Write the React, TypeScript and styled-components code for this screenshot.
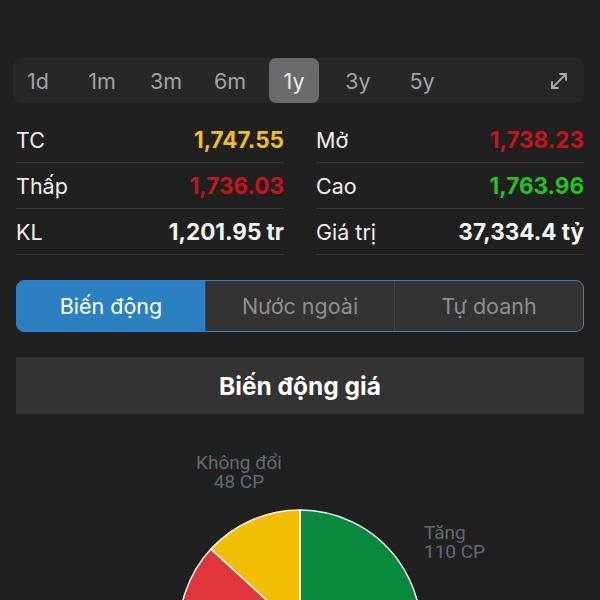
import * as React from "react"
import styled, { createGlobalStyle } from "styled-components"
import { MoveDiagonal } from "lucide-react"

const GlobalStyle = createGlobalStyle`
    html, body {
        margin: 0;
        padding: 0;
        background: #202020;
        height: 600px;
        overflow: hidden;
    }
    body {
        font-family: Inter, "Noto Sans", sans-serif;
        color: #f2f2f2;
    }
`

const Page = styled.div`
    padding: 58px 16px 0;
`

const PeriodBar = styled.div`
    height: 45px;
    margin-left: -3px;
    display: flex;
    align-items: stretch;
    gap: 14px;
    background: #272727;
    border-radius: 8px;
`

const PeriodButton = styled.div<{ $active?: boolean }>`
    width: 50px;
    display: flex;
    align-items: center;
    justify-content: center;
    border-radius: 7px;
    font-size: 21.5px;
    color: ${({ $active }) => ($active ? "#ececec" : "#a3a3a3")};
    background: ${({ $active }) => ($active ? "#6a6a6a" : "transparent")};
`

const ExpandButton = styled.div`
    margin-left: auto;
    width: 50px;
    display: flex;
    align-items: center;
    justify-content: center;
    color: #a8a8a8;
`

const StatsGrid = styled.div`
    margin-top: 14px;
    display: grid;
    grid-template-columns: 1fr 1fr;
    column-gap: 32px;
`

const StatRow = styled.div`
    height: 45px;
    display: flex;
    align-items: center;
    justify-content: space-between;
    border-bottom: 1px solid #3a3a3a;
`

const StatLabel = styled.span`
    font-size: 21.5px;
    color: #f0f0f0;
`

const StatValue = styled.span<{ $color: string }>`
    font-size: 22.5px;
    font-weight: 700;
    color: ${({ $color }) => $color};
`

const Segmented = styled.div`
    margin-top: 25px;
    height: 50px;
    display: flex;
    border: 1.5px solid #2f86c6;
    border-radius: 8px;
    overflow: hidden;
    background: #333333;
`

const Segment = styled.div<{ $active?: boolean }>`
    flex: 1;
    display: flex;
    align-items: center;
    justify-content: center;
    font-size: 21.5px;
    color: ${({ $active }) => ($active ? "#ffffff" : "#8e8e8e")};
    background: ${({ $active }) => ($active ? "#2b80c2" : "transparent")};

    & + & {
        border-left: 1px solid #474747;
    }
`

const SectionHeader = styled.div`
    margin-top: 25px;
    height: 57px;
    display: flex;
    align-items: center;
    justify-content: center;
    background: #333333;
    font-size: 24.5px;
    font-weight: 700;
    color: #ffffff;
`

const ChartWrap = styled.div`
    display: flex;
    justify-content: center;
`

const ChartLabel = styled.text`
    font-family: Roboto, "Noto Sans", sans-serif;
    font-size: 19px;
    fill: #5f6b73;
`

const periods = ["1d", "1m", "3m", "6m", "1y", "3y", "5y"]

const stats = [
    { label: "TC", value: "1,747.55", color: "#ecc21c" },
    { label: "Mở", value: "1,738.23", color: "#c8121c" },
    { label: "Thấp", value: "1,736.03", color: "#c8121c" },
    { label: "Cao", value: "1,763.96", color: "#1ec51e" },
    { label: "KL", value: "1,201.95 tr", color: "#f4f4f4" },
    { label: "Giá trị", value: "37,334.4 tỷ", color: "#f4f4f4" },
]

const tabs = ["Biến động", "Nước ngoài", "Tự doanh"]

const PriceChart = () => (
    <svg width="568" height="360" viewBox="0 0 568 360">
        <path d="M284 217 L284 96 A121 121 0 0 1 398.7 255.4 Z" fill="#078a3b" stroke="#f4f4f4" strokeWidth="1.5" />
        <path d="M284 217 L194.9 135.1 A121 121 0 0 1 284 96 Z" fill="#f2be02" stroke="#f4f4f4" strokeWidth="1.5" />
        <path d="M284 217 L398.7 255.4 A121 121 0 1 1 194.9 135.1 Z" fill="#de363c" stroke="#f4f4f4" strokeWidth="1.5" />
        <ChartLabel x="223" y="55" textAnchor="middle">Không đổi</ChartLabel>
        <ChartLabel x="223" y="74" textAnchor="middle">48 CP</ChartLabel>
        <ChartLabel x="408" y="125">Tăng</ChartLabel>
        <ChartLabel x="408" y="144">110 CP</ChartLabel>
    </svg>
)

export default function App() {
    return (
        <Page>
            <GlobalStyle />
            <PeriodBar>
                {periods.map((p) => (
                    <PeriodButton key={p} $active={p === "1y"}>{p}</PeriodButton>
                ))}
                <ExpandButton>
                    <MoveDiagonal size={24} strokeWidth={2} />
                </ExpandButton>
            </PeriodBar>

            <StatsGrid>
                {stats.map((s) => (
                    <StatRow key={s.label}>
                        <StatLabel>{s.label}</StatLabel>
                        <StatValue $color={s.color}>{s.value}</StatValue>
                    </StatRow>
                ))}
            </StatsGrid>

            <Segmented>
                {tabs.map((t, i) => (
                    <Segment key={t} $active={i === 0}>{t}</Segment>
                ))}
            </Segmented>

            <SectionHeader>Biến động giá</SectionHeader>

            <ChartWrap>
                <PriceChart />
            </ChartWrap>
        </Page>
    )
}
